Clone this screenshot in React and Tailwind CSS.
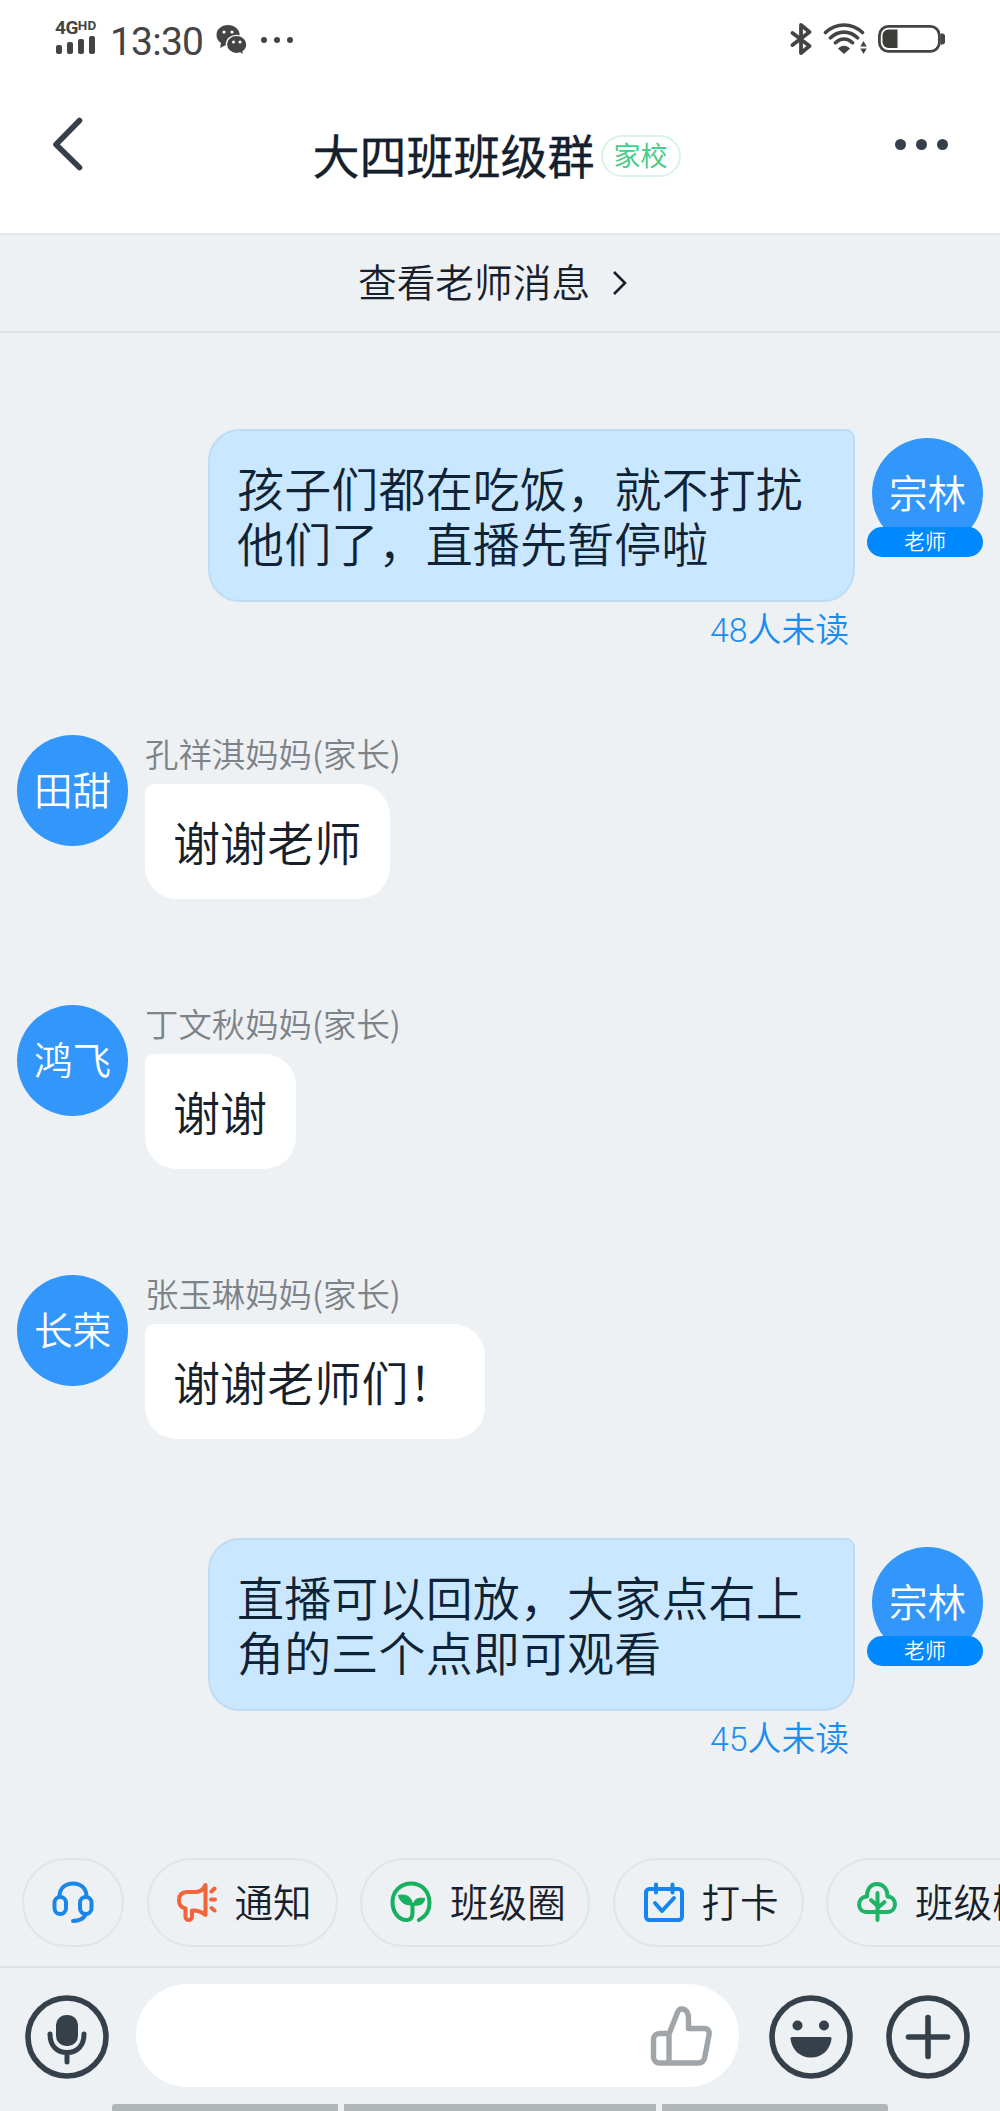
import React from "react";

const messages = [
  {
    id: 1,
    mine: true,
    avatar: "宗林",
    text: "孩子们都在吃饭，就不打扰他们了，直播先暂停啦",
    unread: "48人未读",
  },
  { id: 2, avatar: "田甜", name: "孔祥淇妈妈(家长)", text: "谢谢老师" },
  { id: 3, avatar: "鸿飞", name: "丁文秋妈妈(家长)", text: "谢谢" },
  { id: 4, avatar: "长荣", name: "张玉琳妈妈(家长)", text: "谢谢老师们！" },
  {
    id: 5,
    mine: true,
    avatar: "宗林",
    text: "直播可以回放，大家点右上角的三个点即可观看",
    unread: "45人未读",
  },
];

const WeChatIcon = () => (
  <svg width="32" height="32" viewBox="0 0 32 32" className="shrink-0">
    <path d="M12 1C5.400 1 .5 5.400.5 11c0 3.400 1.700 6 4.500 8l-.8 5 4.600-2.500c1.100.3 2.200.4 3.200.4 6.500 0 11.700-4.800 11.700-10.700S18.500 1 12 1z" fill="#444" />
    <circle cx="8" cy="8" r="1.600" fill="#fff" />
    <circle cx="16" cy="8" r="1.600" fill="#fff" />
    <path d="M20.500 11.400c-5.600 0-10.100 4-10.100 9s4.500 9.200 10.100 9.200c1.200 0 2.400-.2 3.500-.6l4 2.200-.9-3.600c2.400-1.700 3.800-4.300 3.800-7.200 0-5-4.600-9-10.400-9z" fill="#444" stroke="#fff" strokeWidth="1.400" />
    <circle cx="17.500" cy="18" r="1.500" fill="#fff" />
    <circle cx="24" cy="18" r="1.500" fill="#fff" />
  </svg>
);

const StatusBar = () => (
  <div className="h-[70px] px-[55px] flex items-start justify-between text-[#444]">
    <div className="flex items-start">
      <div className="w-[44px] pt-[19px]">
        <div className="flex items-start font-['Roboto'] font-bold leading-none whitespace-nowrap">
          <span className="text-[19px] leading-[17px] tracking-[-0.5px]">4G</span>
          <span className="text-[13.500px] leading-[12px]">HD</span>
        </div>
        <div className="ml-px flex items-end gap-[5px] h-[18px]">
          <i className="w-[6px] h-[9px] rounded-[2px] bg-[#444]" />
          <i className="w-[6px] h-[12px] rounded-[2px] bg-[#444]" />
          <i className="w-[6px] h-[15px] rounded-[2px] bg-[#444]" />
          <i className="w-[6px] h-[18px] rounded-[2px] bg-[#444]" />
        </div>
      </div>
      <div className="ml-[11px] mt-[22px] w-[94px] font-['Roboto'] text-[39px] leading-[40px] tracking-[-0.8px]">13:30</div>
      <div className="ml-[12px] mt-[24px]">
        <WeChatIcon />
      </div>
      <div className="ml-[13px] mt-[37px] flex gap-[7px]">
        <i className="size-[6px] rounded-full bg-[#444]" />
        <i className="size-[6px] rounded-full bg-[#444]" />
        <i className="size-[6px] rounded-full bg-[#444]" />
      </div>
    </div>
    <div className="mt-[22px] flex items-center">
      <svg width="22" height="34" viewBox="0 0 22 34" fill="none" stroke="#444" strokeWidth="3.800" strokeLinecap="round" strokeLinejoin="round">
        <path d="M2.500 11 19.500 24l-8.500 7V3l8.500 7L2.500 23" />
      </svg>
      <svg width="44" height="34" viewBox="0 0 44 34" fill="none" stroke="#444" strokeWidth="3.600" strokeLinecap="round" className="ml-[11px]">
        <path d="M2.500 10.500c11-10 26-10 37 0M7.500 15.800c8-7.600 19-7.600 27 0M12.500 20.700c5-5 12-5 17 0" />
        <path d="M16 26.500c3-2.500 7-2.500 10 0l-5 4.500z" fill="#444" strokeWidth="1.500" />
        <path d="M40.500 19l3.200 5.500h-6.400zM40.500 32l3.200-5.500h-6.400z" fill="#444" stroke="none" />
      </svg>
      <svg width="67" height="34" viewBox="0 0 67 34" fill="none" className="ml-[11px]">
        <rect x="1.400" y="4.400" width="60" height="25" rx="9" stroke="#444" strokeWidth="2.800" />
        <path d="M10.500 7.500h9v18.500h-9a6 6 0 0 1-6-6v-6.500a6 6 0 0 1 6-6z" fill="#3d3d38" />
        <path d="M63.500 12a4 5 0 0 1 0 10z" fill="#444" stroke="#444" strokeWidth="1.500" />
      </svg>
    </div>
  </div>
);

const Header = () => (
  <header className="h-[165px] px-[53px] flex items-start justify-between border-b-2 border-[#e3e5e7]">
    <svg width="30" height="54" viewBox="0 0 30 54" fill="none" stroke="#36404a" strokeWidth="5.600" strokeLinecap="round" strokeLinejoin="round" className="mt-[47px]">
      <path d="M26.500 3.500 3 27.500 26.500 50.500" />
    </svg>
    <div className="ml-[15px] mt-[51px] flex items-center">
      <h1 className="pb-[2px] text-[47px] leading-[66px] font-normal text-[#14202d] [-webkit-text-stroke:0.3px_#14202d]">大四班班级群</h1>
      <span className="mt-px ml-[6px] w-[80px] h-[42px] pb-[3px] rounded-full border-2 border-[#d9f3e7] flex items-center justify-center text-[27px] leading-none text-[#4ccb8b]">
        家校
      </span>
    </div>
    <div className="mt-[69px] -mr-px flex gap-[10px]">
      <i className="size-[11px] rounded-full bg-[#36404a]" />
      <i className="size-[11px] rounded-full bg-[#36404a]" />
      <i className="size-[11px] rounded-full bg-[#36404a]" />
    </div>
  </header>
);

const TeacherLink = () => (
  <div className="h-[98px] pl-[358px] flex items-center border-b-2 border-[#e0e4e7] text-[38.700px] leading-none font-[350] text-[#17202b]">
    <span className="pb-[5px]">查看老师消息</span>
    <svg width="16" height="26" viewBox="0 0 16 26" fill="none" stroke="#17202b" strokeWidth="2.600" className="ml-[22px] mb-px">
      <path d="M2 2l11 11L2 24" />
    </svg>
  </div>
);

const Avatar = ({ text, teacher }) => (
  <div className="relative size-[111px] pb-[4px] shrink-0 rounded-full bg-[#3296fa] flex items-center justify-center text-[38.600px] leading-none font-[350] text-white">
    {text}
    {teacher && (
      <span className="absolute left-[-5px] top-[89px] w-[116px] h-[30px] pb-[4px] rounded-full bg-[#0089ff] flex items-center justify-center text-[21px] leading-none">
        老师
      </span>
    )}
  </div>
);

const MyMessage = ({ message }) => (
  <div className="h-[220px] pr-[17px] flex justify-end items-start">
    <div>
      <div className="w-[647px] h-[173px] pl-[27px] pr-[45px] pt-[28px] rounded-[32px] rounded-tr-[9px] border-2 border-[#c0dcf2] bg-[#c9e7ff] text-[47px] leading-[55px] tracking-[0.16px] font-[350] text-[#0f2336]">
        {message.text}
      </div>
      <p className="mt-[7px] pr-[6px] text-right font-['Roboto','Noto_Sans_CJK_SC',sans-serif] text-[33.800px] leading-[44px] font-[350] text-[#1a8df0]">
        {message.unread}
      </p>
    </div>
    <div className="ml-[17px] mt-[9px]">
      <Avatar text={message.avatar} teacher />
    </div>
  </div>
);

const ParentMessage = ({ message }) => (
  <div className="h-[270px] pl-[17px] flex items-start">
    <Avatar text={message.avatar} />
    <div className="ml-[17px]">
      <p className="h-[49px] text-[33.400px] leading-[36px] font-[350] text-[#7d8388]">{message.name}</p>
      <div className="w-fit h-[115px] pl-[28px] pr-[29px] pb-[3px] rounded-[32px] rounded-tl-[9px] bg-white flex items-center text-[47px] leading-none tracking-[0.12px] font-[350] text-[#171f2a]">
        {message.text}
      </div>
    </div>
  </div>
);

const HeadsetIcon = () => (
  <svg width="42" height="42" viewBox="0 0 42 42" fill="none" stroke="#1a86e8" strokeWidth="4" strokeLinecap="round">
    <path d="M7.500 15.500C7.500 7 13.500 2.500 21 2.500S34.500 7 34.500 15.500" />
    <rect x="2.500" y="16" width="11.500" height="17" rx="5.700" />
    <rect x="28" y="16" width="11.500" height="17" rx="5.700" />
    <path d="M34 33c-2 4-6 7-13 7" />
  </svg>
);

const HornIcon = () => (
  <svg width="40" height="40" viewBox="0 0 40 40" fill="none" stroke="#f2653a" strokeWidth="4" strokeLinecap="round" strokeLinejoin="round">
    <path d="M28.500 3v30c-3-2.500-7-4.500-12-4.500h-1.500V35c0 4-6.500 4-6.500 0v-8.500c-4.500-1-6.500-3.500-6.500-8C2 12.500 5 10 10 10h9c4.500 0 7.500-3 9.500-7z" />
    <path d="M34.500 9.500l3-3M34 17.500h4M34.500 26l3 2.500" />
  </svg>
);

const SproutIcon = () => (
  <svg width="42" height="42" viewBox="0 0 42 42" fill="none" stroke="#16b05f" strokeWidth="4" strokeLinecap="round">
    <path d="M29 39c6-3 10.500-9 10.500-17C39.500 10 31.500 2.500 21 2.500S2.500 10.500 2.500 21c0 10 6 18 14 18 4 0 6-2.500 6-7V24" />
    <path d="M8.500 14.500c7-2 13.500 1 14 9.500-7.500.5-12.500-3-14-9.500zM34.500 17.500c0 5-4 7.500-11 6.500 0-5 4-8 11-6.500z" fill="#16b05f" strokeWidth="1" strokeLinejoin="round" />
  </svg>
);

const CalendarIcon = () => (
  <svg width="40" height="40" viewBox="0 0 40 40" fill="none" stroke="#1485f2" strokeWidth="4" strokeLinecap="round" strokeLinejoin="round">
    <rect x="2" y="7" width="36" height="31" rx="3.500" />
    <path d="M12 2.500v8M28.500 2.500v8M11 21l7 8 12-13" />
  </svg>
);

const TreeIcon = () => (
  <svg width="40" height="40" viewBox="0 0 40 40" fill="none" stroke="#1db465" strokeWidth="4" strokeLinecap="round" strokeLinejoin="round">
    <path d="M10 30c-10.500 0-10.500-15 0-15.500C10 6.500 14 2 20 2s10.500 4.500 10.500 12.500c10 .5 10 15.500-.5 15.500z" />
    <path d="M20.500 11v27M14 18l6.500 6M27.500 20l-7 6" />
  </svg>
);

const chips = [
  { id: "service", icon: HeadsetIcon, box: "w-[102px] justify-center" },
  { id: "notice", icon: HornIcon, label: "通知", box: "w-[191px] pl-[28px]" },
  { id: "moments", icon: SproutIcon, label: "班级圈", box: "w-[230px] pl-[28px]" },
  { id: "checkin", icon: CalendarIcon, label: "打卡", box: "w-[191px] pl-[29px]" },
  { id: "trees", icon: TreeIcon, label: "班级树", box: "w-[231px] pl-[29px]" },
];

const ChipBar = () => (
  <div className="h-[111px] pl-[22px] pt-px flex gap-[22.500px] overflow-hidden border-b-2 border-[#dfe2e5]">
    {chips.map(({ id, icon: Icon, label, box }) => (
      <button key={id} className={`h-[89px] pb-[2px] shrink-0 rounded-full border-2 border-[#e1e5e8] flex items-center ${box}`}>
        <Icon />
        {label && (
          <span className="ml-[18px] pb-[3px] text-[38.600px] leading-none font-[350] text-[#17202b] whitespace-nowrap">{label}</span>
        )}
      </button>
    ))}
  </div>
);

const ThumbIcon = () => (
  <svg width="62" height="62" viewBox="0 0 62 62" fill="none" stroke="#9fa5a9" strokeWidth="5.400" strokeLinejoin="round" strokeLinecap="round">
    <path d="M19 28.500H9.500a6 6 0 0 0-6 6V52a6 6 0 0 0 6 6H48c4 0 6-2 6.700-5.500L59 30c.7-4-1-6.500-4.500-6.500H38.500V14c0-6-2.500-9.500-6-10-3-.4-4 1-5 3.500L19 29v29" />
  </svg>
);

const MicIcon = () => (
  <svg width="84" height="84" viewBox="0 0 84 84" fill="none" stroke="#36404a" strokeWidth="5.600" strokeLinecap="round">
    <circle cx="42" cy="42" r="39" />
    <rect x="31" y="20" width="22" height="31" rx="10" fill="#36404a" stroke="none" />
    <path d="M25 39c0 12 7 18.500 17 18.500S59 51 59 39M42 58v9" strokeWidth="5" />
  </svg>
);

const SmileIcon = () => (
  <svg width="84" height="84" viewBox="0 0 84 84" fill="none">
    <circle cx="42" cy="42" r="39" stroke="#36404a" strokeWidth="5.600" />
    <circle cx="28.500" cy="30.500" r="5" fill="#36404a" />
    <circle cx="55" cy="30.500" r="5" fill="#36404a" />
    <path d="M23 42h38c1 0 1.700.8 1.500 2C61 55 53 62.500 42 62.500S23 55 21.500 44c-.2-1.200.5-2 1.500-2z" fill="#36404a" />
  </svg>
);

const PlusIcon = () => (
  <svg width="84" height="84" viewBox="0 0 84 84" fill="none" stroke="#36404a" strokeWidth="5.600" strokeLinecap="round">
    <circle cx="42" cy="42" r="39" />
    <path d="M42 22.500v39M22.500 42h39" />
  </svg>
);

const InputBar = () => (
  <div className="h-[136px] pl-[25px] pr-[30px] pt-[16px] flex items-start">
    <div className="mt-[11px]">
      <MicIcon />
    </div>
    <div className="ml-[27px] w-[603px] h-[103px] pr-[27px] rounded-full bg-white flex items-center justify-end">
      <ThumbIcon />
    </div>
    <div className="mt-[11px] ml-[30px]">
      <SmileIcon />
    </div>
    <div className="mt-[11px] ml-[33px]">
      <PlusIcon />
    </div>
  </div>
);

export default function App() {
  return (
    <div className="w-[1000px] h-[2111px] overflow-hidden flex flex-col bg-[#edf1f4] font-['Noto_Sans_CJK_SC',sans-serif]">
      <div className="bg-white">
        <StatusBar />
        <Header />
      </div>
      <TeacherLink />
      <main className="pt-[96px] flex-1">
        <MyMessage message={messages[0]} />
        <div className="pt-[86px]">
          {messages.slice(1, 4).map((message) => (
            <ParentMessage key={message.id} message={message} />
          ))}
        </div>
        <div className="-mt-[7px]">
          <MyMessage message={messages[4]} />
        </div>
      </main>
      <ChipBar />
      <InputBar />
      {/* system navigation strip, cut by the screen edge */}
      <div className="h-[7px] px-[112px] flex gap-[6px]">
        <i className="w-[226px] rounded-tl-[3px] bg-[#b1b6b9]" />
        <i className="w-[313px] bg-[#b1b6b9]" />
        <i className="w-[226px] rounded-tr-[3px] bg-[#b1b6b9]" />
      </div>
    </div>
  );
}
